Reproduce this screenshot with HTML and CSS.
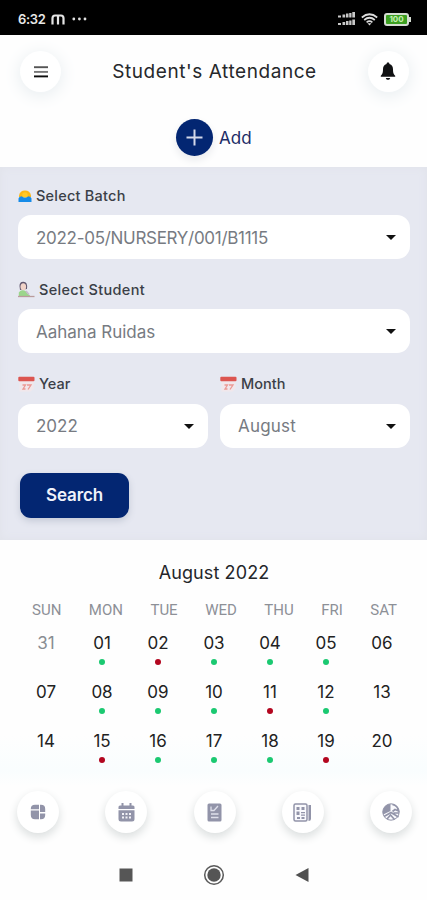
FILE: index.html
```html
<!DOCTYPE html>
<html lang="en">
<head>
<meta charset="utf-8">
<meta name="viewport" content="width=device-width, initial-scale=1">
<title>Student's Attendance</title>
<link rel="stylesheet" href="styles.css">
</head>
<body>
<div class="status">
  <span class="time">6:32</span>
  <svg class="mi" width="14" height="11" viewBox="0 0 14 11" fill="none" stroke="#e4e4e4" stroke-width="2.2"><path d="M1.500 10.500V4.200Q1.500 1.500 4 1.500H10Q12.500 1.500 12.500 4.200V10.500M7 1.500V10.500"/></svg>
  <svg class="more" width="15" height="4" fill="#e0e0e0"><circle cx="1.8" cy="2" r="1.4"/><circle cx="7.4" cy="2" r="1.4"/><circle cx="13" cy="2" r="1.4"/></svg>
  <svg class="signal" width="18" height="14" viewBox="0 0 18 14" fill="#c8c8c8"><path d="M0 3.500h3v2H0zM4.500 2.500h2.700v3H4.500zM8 1.500h2.500v4H8zM11.200 1h2.300v4.500h-2.300zM14.300 0H17v5.500h-2.700zM0 11h3v2H0zM4.500 10h2.700v3H4.500zM8 9h2.500v4H8zM11.200 8.500h2.300V13h-2.300zM14.300 7.500H17V13h-2.700z"/></svg>
  <svg class="wifi" width="17" height="13" viewBox="0 0 17 13" fill="none" stroke="#ddd" stroke-width="1.7"><path d="M.8 4.500Q8.500-2 16.200 4.500M3.200 7Q8.500 2.500 13.800 7M5.600 9.300Q8.500 7 11.400 9.300"/><path d="M6.500 10.200h4L8.500 12.500z" fill="#ddd" stroke="none"/></svg>
  <span class="battery">100</span>
</div>
<header class="header">
  <button class="round menu" aria-label="Menu"><svg width="16" height="12" fill="none" stroke-width="1.900"><path d="M1 1.200h14" stroke="#555"/><path d="M1 5.900h14" stroke="#777"/><path d="M1 10.400h14" stroke="#0c0c0c"/></svg></button>
  <h1>Student's Attendance</h1>
  <button class="round" aria-label="Notifications"><svg width="16" height="19" viewBox="0 0 16 19" fill="#101113"><path d="M8 .6c.9 0 1.400.5 1.400 1.300C12 2.600 13 4.800 13 7.200c0 4 .8 5 2.200 6.600v1H.8v-1C2.200 12.200 3 11.200 3 7.200c0-2.400 1-4.600 3.600-5.300C6.600 1.100 7.100.6 8 .6zM5.800 15.900h4.400c-.3 1.200-1.100 1.900-2.200 1.900s-1.900-.7-2.200-1.900z"/></svg></button>
</header>
<div class="add">
  <span class="plus"><svg width="17" height="17" stroke="#d3d8ea" stroke-width="2"><path d="M8.500.5v16M.5 8.500h16"/></svg></span>
  <span>Add</span>
</div>
<form class="filters">
  <div class="label batch"><svg width="14" height="12" viewBox="0 0 14 12"><path d="M1 7V5.500Q2 .5 7 .5T13 5.500V7z" fill="#fcb817"/><circle cx="7" cy="5" r="2.700" fill="#ffc928"/><path d="M.5 12V8.500Q1 6.500 3.500 6.300Q7 9 10.500 6.300Q13 6.500 13.500 8.500V12z" fill="#168be8"/></svg><span>Select Batch</span></div>
  <div class="select code"><span>2022-05/NURSERY/001/B1115</span><i></i></div>
  <div class="label student"><svg width="17" height="17" viewBox="0 0 17 17"><path d="M2 9Q0 1 5 .8Q10 .5 9 8z" fill="#62586f"/><ellipse cx="5.300" cy="5.800" rx="2.800" ry="3.500" fill="#f1d3c8"/><path d="M.8 15V11.500Q2 9.500 4 9.300Q8 9 9 12L12 14.500V15z" fill="#9bd68c"/><path d="M8 10l3 3.500" stroke="#c5bccb" stroke-width="1.500"/><path d="M0 15.500h16.500" stroke="#b99b9c" stroke-width="1.300"/></svg><span>Select Student</span></div>
  <div class="select"><span>Aahana Ruidas</span><i></i></div>
  <div class="pair">
    <div>
      <div class="label"><svg width="17" height="16" viewBox="0 0 17 16"><path d="M1.500 4h14v8.500l-3 3h-11z" fill="#f1e7eb"/><rect x=".3" y=".8" width="16.200" height="4.500" rx="1" fill="#dc5550"/><path d="M4.500 9h3l-2.500 4h2.500M9 9h4l-3 4.500" fill="none" stroke="#eb9994" stroke-width="1.300"/></svg><span>Year</span></div>
      <div class="select"><span>2022</span><i></i></div>
    </div>
    <div>
      <div class="label"><svg width="17" height="16" viewBox="0 0 17 16"><path d="M1.500 4h14v8.500l-3 3h-11z" fill="#f1e7eb"/><rect x=".3" y=".8" width="16.200" height="4.500" rx="1" fill="#dc5550"/><path d="M4.500 9h3l-2.500 4h2.500M9 9h4l-3 4.500" fill="none" stroke="#eb9994" stroke-width="1.300"/></svg><span>Month</span></div>
      <div class="select month"><span>August</span><i></i></div>
    </div>
  </div>
  <button type="button" class="search">Search</button>
</form>
<main class="calendar">
  <h2>August 2022</h2>
  <div class="weekdays"><span>SUN</span><span>MON</span><span>TUE</span><span>WED</span><span>THU</span><span>FRI</span><span>SAT</span></div>
  <div class="days">
    <span class="out">31</span><span class="here">01</span><span class="away">02</span><span class="here">03</span><span class="here">04</span><span class="here">05</span><span>06</span>
    <span>07</span><span class="here">08</span><span class="here">09</span><span class="here">10</span><span class="away">11</span><span class="here">12</span><span>13</span>
    <span>14</span><span class="away">15</span><span class="here">16</span><span class="here">17</span><span class="here">18</span><span class="away">19</span><span>20</span>
  </div>
</main>
<nav class="tabs">
  <span class="tab"><svg width="16" height="16" fill="#9294a9"><path d="M5 .8h4v4.500H.8V5q0-4.200 4.200-4.200zM10 .8h1q4.200 0 4.200 4.200v3H10zM.8 6.500H9v8.700H5q-4.200 0-4.200-4.200zM10 9.500h5.200V11q0 4.200-4.200 4.200h-1z"/></svg></span>
  <span class="tab"><svg width="17" height="19" viewBox="0 0 17 19"><path d="M3.500 0h2v2.500h6V0h2v2.500H15q1.500 0 1.500 1.500v2H.5V4Q.5 2.500 2 2.500h1.500zM.5 7.300h16V16q0 2.500-2.500 2.500H3Q.5 18.500.5 16z" fill="#9294a9"/><path d="M4 10h2v2H4zm3.500 0h2v2h-2zm3.500 0h2v2h-2zM4 13.500h2v2H4zm3.500 0h2v2h-2zm3.500 0h2v2h-2z" fill="#f2f2f8"/></svg></span>
  <span class="tab"><svg width="15" height="19" viewBox="0 0 15 19"><rect x=".5" y=".5" width="14" height="18" rx="1.500" fill="#9294a9"/><path d="M4 3.500v4h3l4-4.500M4 11h7.500M4 14.500h7.500" fill="none" stroke="#dedfea" stroke-width="1.300"/></svg></span>
  <span class="tab"><svg width="19" height="19" viewBox="0 0 19 19"><rect x="1" y="1" width="13" height="17" rx="1.500" fill="#fafafd" stroke="#9294a9" stroke-width="1.500"/><path d="M15.500 2H18v14q0 2-2.500 2z" fill="#9294a9"/><path d="M3.500 4h3v3h-3zM8.500 4h3v3h-3zM3.500 8.500h3V12h-3zM8 9h4v1.200H8zM8 11.500h4v1.200H8zM4 14h3v2H4zM8.500 14h3v2h-3z" fill="#9294a9"/></svg></span>
  <span class="tab"><svg width="18" height="18" viewBox="0 0 18 18"><circle cx="9" cy="9" r="8.200" fill="#fafafd" stroke="#9294a9" stroke-width="1"/><path d="M8.500 8L1.200 11.500A8 8 0 0 1 8.500 1z" fill="#9294a9"/><path d="M10.500 1.500Q16 3 16.500 8L13 6.500L10.500 8.500M2 13.500l7-4 7.500 4.500M5 16l3.500-4 4 4.500M11.500 10H17" fill="none" stroke="#9294a9" stroke-width="1.700"/></svg></span>
</nav>
<div class="system">
  <svg width="14" height="14"><rect width="13" height="13" x=".5" y=".5" fill="#565656"/></svg>
  <svg width="22" height="22"><circle cx="11" cy="11" r="9.300" fill="none" stroke="#5a5a5a" stroke-width="1.500"/><circle cx="11" cy="11" r="6.700" fill="#555"/></svg>
  <svg width="14" height="16"><path d="M.5 8L13.500 1v14z" fill="#505050"/></svg>
</div>
</body>
</html>
```
FILE: styles.css
```css
* { box-sizing: border-box; }
body {
  margin: 0;
  height: 900px;
  overflow: hidden;
  background: #fefefe;
  font-family: Inter, "Liberation Sans", sans-serif;
  color: #222;
}
button { border: 0; padding: 0; font: inherit; }
svg { display: block; flex: none; }

.status {
  display: flex;
  align-items: center;
  height: 35px;
  padding: 3px 17px 0 18px;
  background: #000;
}
.time { width: 28px; font-size: 13px; font-weight: 600; letter-spacing: -0.35px; color: #e8e8e8; }
.mi { margin-left: 5px; }
.more { margin-left: 7px; }
.signal { margin-left: auto; }
.wifi { margin-left: 5px; }
.battery {
  position: relative;
  width: 25px;
  height: 13px;
  margin: 0 1px 0 6px;
  border: 2px solid #d5ddd2;
  border-radius: 3px;
  background: #3b9f20;
  color: #c4efb2;
  font-size: 8px;
  font-weight: 700;
  line-height: 9px;
  text-align: center;
}
.battery::after {
  content: "";
  position: absolute;
  right: -4px;
  top: 2px;
  width: 2px;
  height: 5px;
  background: #d5ddd2;
}

.header {
  display: flex;
  align-items: center;
  justify-content: space-between;
  height: 73px;
  padding: 0 18px 0 20px;
}
.round {
  display: grid;
  place-items: center;
  width: 41px;
  height: 41px;
  border-radius: 50%;
  background: #fff;
  box-shadow: 0 3px 18px #e6ecef;
}
h1 { margin: 0; font-size: 19px; font-weight: 400; letter-spacing: 0.57px; color: #26282b; white-space: nowrap; }

.add {
  display: flex;
  align-items: center;
  gap: 6px;
  height: 59px;
  padding-left: 176px;
  font-size: 17px;
  color: #1c2c66;
}
.plus {
  display: grid;
  place-items: center;
  width: 37px;
  height: 37px;
  border-radius: 50%;
  background: #032672;
  box-shadow: 0 4px 8px #e9eaed;
}

.filters {
  height: 373px;
  padding: 17px 17px 0 18px;
  background: #e6e8f1;
  box-shadow: inset 0 0 8px #e0e2e9;
}
.label {
  display: flex;
  align-items: center;
  gap: 4px;
  height: 23px;
  font-size: 14.5px;
  font-weight: 500;
  color: #3b3f47;
}
.batch { letter-spacing: 0.23px; }
.student { letter-spacing: 0.33px; }
.select {
  display: flex;
  align-items: center;
  justify-content: space-between;
  height: 44px;
  margin: 8.2px 0 19px;
  padding: 1px 14px 0 18px;
  border-radius: 13px;
  background: #fff;
  font-size: 17px;
  color: #777b82;
}
.code { letter-spacing: -0.29px; }
.month { letter-spacing: 0.2px; }
.select i { border: 5px solid transparent; border-top-color: #111; border-bottom: 0; }
.pair { display: grid; grid-template-columns: 190px 190px; gap: 12px; }
.search {
  display: block;
  width: 109px;
  height: 45px;
  margin: 6px 0 0 2px;
  border-radius: 11px;
  background: #032672;
  box-shadow: 0 3px 7px #c4c9d6;
  color: #f0f2fa;
  font-size: 17px;
  font-weight: 600;
  letter-spacing: -0.1px;
}

.calendar { height: 230px; background: linear-gradient(#fefefe 85%, #f9fdfe); }
h2 { margin: 0; padding: 21px 0 0 1px; font-size: 18px; line-height: 24px; font-weight: 400; letter-spacing: 0.1px; text-align: center; color: #24262a; }
.weekdays {
  display: flex;
  justify-content: space-between;
  padding: 15px 30px 0 32px;
  font: 400 15px/20px Roboto, sans-serif;
  color: #8d9097;
}
.days {
  display: grid;
  grid-template-columns: repeat(7, 56px);
  grid-auto-rows: 49px;
  padding: 12px 0 0 18px;
}
.days span {
  display: flex;
  flex-direction: column;
  align-items: center;
  font-size: 17px;
  line-height: 22px;
}
.days .out { color: #898d92; }
.here::after, .away::after { content: ""; width: 6px; height: 6px; margin-top: 5px; border-radius: 50%; background: #1bc971; }
.away::after { background: #b3061f; }

.tabs {
  display: flex;
  justify-content: space-between;
  align-items: center;
  height: 82px;
  padding: 2px 15px 0 17px;
  background: linear-gradient(#f9fdfe, #fefefe 20%);
}
.tab {
  display: grid;
  place-items: center;
  width: 42px;
  height: 42px;
  border-radius: 50%;
  background: #fff;
  box-shadow: 0 4px 10px #d9dddd;
}
.system { display: flex; align-items: center; height: 48px; padding: 0 118px 0 119px; justify-content: space-between; margin-top: -1px; }
```
